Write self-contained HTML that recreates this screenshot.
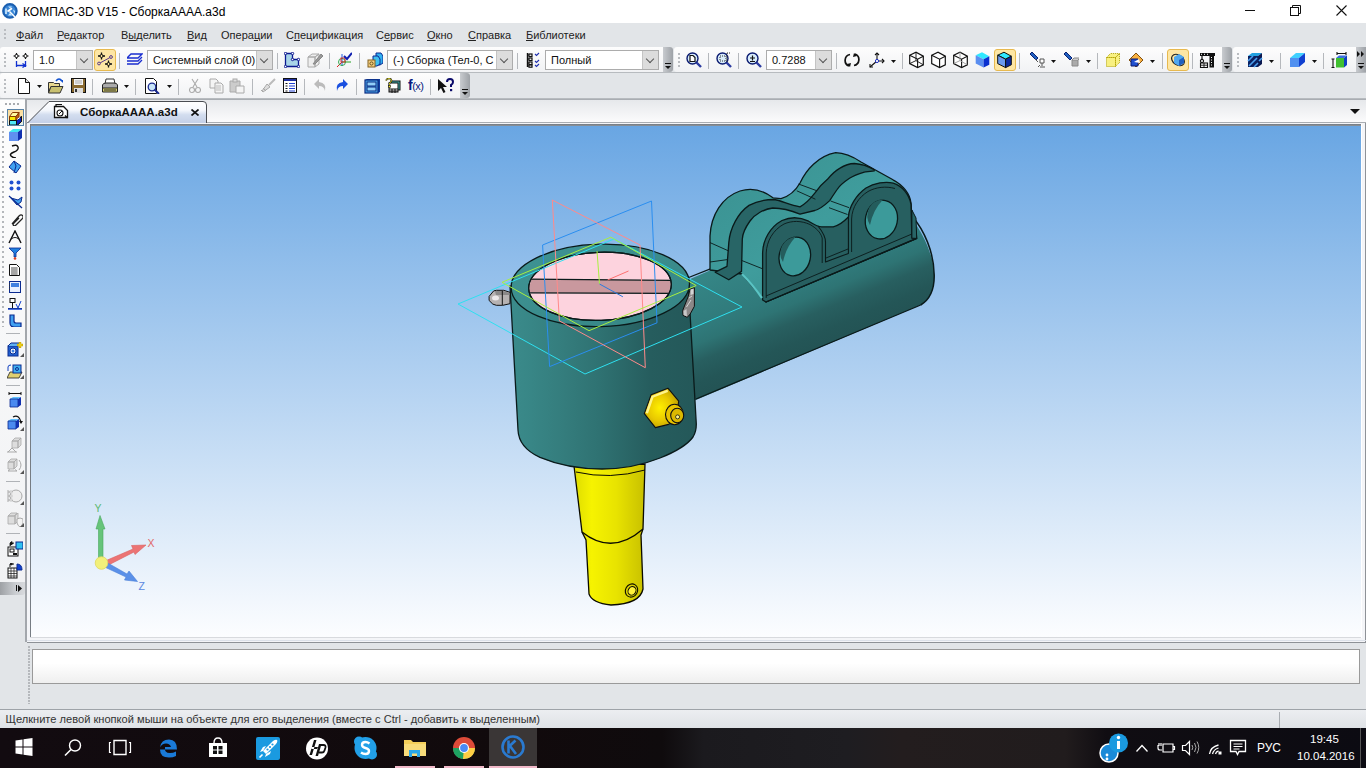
<!DOCTYPE html>
<html><head><meta charset="utf-8">
<style>
*{margin:0;padding:0;box-sizing:border-box}
html,body{width:1366px;height:768px;overflow:hidden;background:#e2e5e8;font-family:"Liberation Sans",sans-serif;position:relative}
.a{position:absolute}
#title{left:0;top:0;width:1366px;height:23px;background:#fff}
#title .t{left:23px;top:5px;font-size:12px;color:#000;white-space:nowrap}
#menu{left:0;top:23px;width:1366px;height:24px;background:#e2e5e8}
#menu span{position:absolute;top:6px;font-size:11px;color:#222;white-space:nowrap}
.tb{background:linear-gradient(#fdfdfd,#f1f2f4);border-radius:3px 3px 3px 3px}
.grip{width:2px;background:repeating-linear-gradient(#b9bcc0 0 2px,transparent 2px 4px)}
.sep{width:1px;height:16px;background:#b5b8bc}
.combo{height:20px;background:#fff;border:1px solid #acacac;font-size:11px;color:#111;padding:3px 0 0 5px;white-space:nowrap;overflow:hidden}
.combo .dd{position:absolute;right:0;top:0;width:16px;height:18px;background:#dcdcdc;border-left:1px solid #c4c4c4}
.combo .dd:after{content:"";position:absolute;left:4px;top:5px;width:5px;height:5px;border-right:1px solid #555;border-bottom:1px solid #555;transform:rotate(45deg)}
.hl{background:#fde6a4;border:1px solid #e7b94f;border-radius:3px}
.endg{background:linear-gradient(90deg,#c8cbcf,#9ea2a7);border-radius:0 3px 3px 0}
#vp{left:31px;top:126px;width:1330px;height:511px;background:linear-gradient(#69a6e3,#fcfdff)}
#status{left:0;top:709px;width:1366px;height:19px;background:linear-gradient(#eceef1,#dfe2e6);border-top:1px solid #9ea3a8}
#status .t{left:5.5px;top:3px;font-size:11.1px;color:#333;white-space:nowrap}
#task{left:0;top:728px;width:1366px;height:40px;background:#110b10}
</style></head><body>
<!-- title bar -->
<div id="title" class="a">
  <svg class="a" style="left:2px;top:3px" width="17" height="17" viewBox="0 0 17 17"><circle cx="7.9" cy="7.9" r="6.8" fill="#3a86d6" stroke="#1b5fb0" stroke-width="2"/><path d="M4 5.5v5.5" stroke="#d8f0ff" stroke-width="1.6"/><path d="M6 3.5h4l-2 1.8z" fill="#c8eaff"/><path d="M5.5 8.5l4.5-3.2" stroke="#fff" stroke-width="1.7"/><path d="M7.5 8.5l5.5 5.5" stroke="#fff" stroke-width="1.5"/><path d="M11 6.5l2 1.5-.5 3z" fill="#c8eaff"/><path d="M6 12.5h4l-2-2.5z" fill="#c8eaff"/></svg>
  <div class="a t">КОМПАС-3D V15 - СборкаАААА.a3d</div>
  <div class="a" style="left:1245px;top:10px;width:10px;height:1px;background:#111"></div>
  <svg class="a" style="left:1290px;top:5px" width="11" height="11" viewBox="0 0 11 11"><rect x="0.5" y="2.5" width="8" height="8" fill="none" stroke="#111"/><path d="M2.5 2.5V0.5h8v8h-2" fill="none" stroke="#111"/></svg>
  <svg class="a" style="left:1336px;top:5px" width="11" height="11" viewBox="0 0 11 11"><path d="M0.5 0.5l10 10M10.5 0.5l-10 10" stroke="#111" stroke-width="1.1"/></svg>
</div>
<!-- menu -->
<div id="menu" class="a">
  <div class="a grip" style="left:4px;top:6px;height:12px"></div>
  <span style="left:16px"><u>Ф</u>айл</span>
  <span style="left:57px"><u>Р</u>едактор</span>
  <span style="left:121px">В<u>ы</u>делить</span>
  <span style="left:187px"><u>В</u>ид</span>
  <span style="left:221px">Опера<u>ц</u>ии</span>
  <span style="left:286px">С<u>п</u>ецификация</span>
  <span style="left:376px">С<u>е</u>рвис</span>
  <span style="left:427px"><u>О</u>кно</span>
  <span style="left:468px"><u>С</u>правка</span>
  <span style="left:526px"><u>Б</u>иблиотеки</span>
</div>
<!-- toolbar lines -->
<div class="a" style="left:0;top:72px;width:1366px;height:1px;background:#b7bbbf"></div>
<div class="a" style="left:0;top:98px;width:1366px;height:1px;background:#b7bbbf"></div>
<!-- row1 panels -->
<div class="a tb" style="left:0;top:47px;width:673px;height:25px"></div>
<div class="a tb" style="left:674px;top:47px;width:557px;height:25px"></div>
<div class="a tb" style="left:1233px;top:47px;width:133px;height:25px"></div>
<!-- row2 panel -->
<div class="a tb" style="left:0;top:73px;width:470px;height:25px"></div>
<div class="a grip" style="left:4px;top:53px;height:14px"></div>
<svg class="a" style="left:13px;top:52px" width="16" height="16" viewBox="0 0 16 16"><g stroke="#111" stroke-width="1.2" fill="none"><path d="M3.5 1v6M0.5 4h6M12.5 1v6M9.5 4h6"/></g><circle cx="3.5" cy="4" r="1.6" fill="#fff" stroke="#111"/><circle cx="12.5" cy="4" r="1.6" fill="#fff" stroke="#111"/><g stroke="#1030d0" stroke-width="1.3" fill="none"><path d="M3.5 9v6M12.5 9v6M3.5 13.5h9"/><path d="M9.5 11.5l3 2-3 2"/></g></svg>
<div class="a combo" style="left:33px;top:50px;width:60px">1.0<div class="dd"></div></div>
<div class="a hl" style="left:94px;top:49px;width:22px;height:22px"></div>
<svg class="a" style="left:97px;top:52px" width="16" height="16" viewBox="0 0 16 16"><g stroke="#111" stroke-width="1.3"><path d="M4.5 0.5v7M1 4h7M11.5 8.5v7M8 12h7"/></g><circle cx="4.5" cy="4" r="1.5" fill="#fde49b" stroke="#111"/><circle cx="11.5" cy="12" r="1.5" fill="#fde49b" stroke="#111"/><path d="M2 11.5L14 5" stroke="#5a3c8c" stroke-width="1"/><circle cx="2" cy="11.5" r="1.4" fill="#fde49b" stroke="#5a3c8c"/><circle cx="14" cy="5" r="1.4" fill="#fde49b" stroke="#5a3c8c"/></svg>
<div class="a sep" style="left:119px;top:53px"></div>
<svg class="a" style="left:127px;top:52px" width="16" height="16" viewBox="0 0 16 16"><g fill="none" stroke="#1a2ed0" stroke-width="1.3"><path d="M4 2h11l-4 4H0z"/><path d="M0 9h11l4-4M0 12h11l4-4"/></g></svg>
<div class="a combo" style="left:147px;top:50px;width:126px">Системный слой (0)<div class="dd"></div></div>
<div class="a sep" style="left:277px;top:53px"></div>
<svg class="a" style="left:284px;top:52px" width="16" height="16" viewBox="0 0 16 16"><path d="M1.5 1.5h7v6h6v7h-13z" fill="#a8d4e8" stroke="#0a1890" stroke-width="1.3"/><g fill="#fff" stroke="#0a1890" stroke-width="1"><circle cx="1.5" cy="1.5" r="1.2"/><circle cx="8.5" cy="1.5" r="1.2"/><circle cx="8.5" cy="7.5" r="1.2"/><circle cx="14.5" cy="7.5" r="1.2"/><circle cx="14.5" cy="14.5" r="1.2"/><circle cx="1.5" cy="14.5" r="1.2"/></g></svg>
<svg class="a" style="left:307px;top:52px" width="16" height="16" viewBox="0 0 16 16"><g fill="#eee" stroke="#aaa" stroke-width="1"><path d="M1 5l4-3h7l-4 3zM1 5h7v10H1zM8 5l4-3v10l-4 3z"/></g><path d="M6 12l8-10 2 2-8 8z" fill="#999" stroke="#888"/></svg>
<div class="a sep" style="left:329px;top:53px"></div>
<svg class="a" style="left:336px;top:52px" width="16" height="16" viewBox="0 0 16 16"><path d="M1 15l5-5" stroke="#e02020"/><path d="M6 2v12" stroke="#2060e0"/><path d="M6 10h9" stroke="#20a020"/><circle cx="6" cy="10" r="3.5" fill="none" stroke="#20a040" stroke-width="0.9"/><rect x="5" y="6" width="4" height="4" fill="none" stroke="#e02020" stroke-width="0.9"/><path d="M8 4l3 3 5-6" fill="none" stroke="#1020b0" stroke-width="2"/></svg>
<div class="a sep" style="left:359px;top:53px"></div>
<svg class="a" style="left:367px;top:52px" width="16" height="16" viewBox="0 0 16 16"><path d="M9 1h5l2 3v7l-3 2H9z" fill="#30b0f0" stroke="#0a2890"/><path d="M6 4h5l2 3v5l-3 2H6z" fill="#40c0f0" stroke="#0a2890"/><rect x="1" y="8" width="7" height="7" fill="#f8d080" stroke="#806020"/><circle cx="4.5" cy="11.5" r="1.6" fill="none" stroke="#605020"/></svg>
<div class="a combo" style="left:387px;top:50px;width:126px">(-) Сборка (Тел-0, С<div class="dd"></div></div>
<div class="a sep" style="left:517px;top:53px"></div>
<svg class="a" style="left:526px;top:52px" width="16" height="16" viewBox="0 0 16 16"><path d="M1.5 1v14" stroke="#111" stroke-width="1.4"/><g fill="#fff" stroke="#111" stroke-width="1.2"><rect x="3" y="2" width="3" height="2.5"/><rect x="3" y="6" width="3" height="2.5"/><rect x="3" y="10" width="3" height="2.5"/><rect x="3" y="13" width="3" height="2.2"/></g><path d="M1.5 3h1.5M1.5 7h1.5M1.5 11h1.5M1.5 14h1.5" stroke="#111"/><g fill="none" stroke="#2030b0" stroke-width="1.1"><path d="M9 2l1.5 1.5L13 1M9 9l1.5 1.5L13 8M9 13l1.5 1.5L13 12"/></g></svg>
<div class="a combo" style="left:545px;top:50px;width:114px">Полный<div class="dd"></div></div>
<div class="a endg" style="left:663px;top:47px;width:10px;height:25px"><div class="a" style="left:2px;top:16px;width:6px;height:1px;background:#111"></div><svg class="a" style="left:2px;top:19px" width="7" height="4" viewBox="0 0 7 4"><path d="M0 0h6l-3 3z" fill="#111"/></svg></div>
<div class="a grip" style="left:678px;top:53px;height:14px"></div>
<svg class="a" style="left:686px;top:52px" width="16" height="16" viewBox="0 0 16 16"><circle cx="6.5" cy="6.5" r="5.5" fill="#d8ecfa" stroke="#0a1a70" stroke-width="1.4"/><path d="M4 3.5h3l2 2v4H4z" fill="#fff" stroke="#111" stroke-width="1.2"/><path d="M10.5 10.5l4.5 4.5" stroke="#2a3aa0" stroke-width="2.4"/></svg>
<div class="a sep" style="left:708px;top:53px"></div>
<svg class="a" style="left:716px;top:52px" width="16" height="16" viewBox="0 0 16 16"><circle cx="6.5" cy="6.5" r="5.5" fill="#d8ecfa" stroke="#0a1a70" stroke-width="1.4"/><rect x="4" y="4" width="6" height="5" fill="none" stroke="#333" stroke-dasharray="1 1"/><path d="M11 1v9M11 1h4" stroke="#333" stroke-dasharray="1 1"/><path d="M10.5 10.5l4.5 4.5" stroke="#2a3aa0" stroke-width="2.4"/></svg>
<div class="a sep" style="left:738px;top:53px"></div>
<svg class="a" style="left:746px;top:52px" width="16" height="16" viewBox="0 0 16 16"><circle cx="6.5" cy="6.5" r="5.5" fill="#d8ecfa" stroke="#0a1a70" stroke-width="1.4"/><path d="M6.5 3.5v5M4 6h5M4 9.5h5" stroke="#111" stroke-width="1.2"/><path d="M10.5 10.5l4.5 4.5" stroke="#2a3aa0" stroke-width="2.4"/></svg>
<div class="a combo" style="left:766px;top:50px;width:66px">0.7288<div class="dd"></div></div>
<div class="a sep" style="left:836px;top:53px"></div>
<svg class="a" style="left:844px;top:52px" width="16" height="16" viewBox="0 0 16 16"><g fill="none" stroke="#111" stroke-width="1.7"><path d="M6 2.5A6 6 0 0 0 5 14"/><path d="M10 13.5A6 6 0 0 0 11 2"/></g><path d="M3 12l3 3 1-4z" fill="#111"/><path d="M13 4l-3-3-1 4z" fill="#111"/></svg>
<svg class="a" style="left:869px;top:52px" width="16" height="16" viewBox="0 0 16 16"><g stroke="#111" stroke-width="1.1" fill="none"><path d="M8 9V1M8 9h7M8 9L1 15"/><path d="M6 3l2-2 2 2M13 7l2 2-2 2M1 12v3h3"/></g><circle cx="8" cy="9" r="1.6" fill="#fff" stroke="#2030c0"/></svg>
<svg class="a" style="left:891px;top:60px" width="6" height="4" viewBox="0 0 6 4"><path d="M0 0h5l-2.5 3z" fill="#111"/></svg>
<div class="a sep" style="left:902px;top:53px"></div>
<svg class="a" style="left:909px;top:51px" width="16" height="18" viewBox="0 0 16 18"><path d="M0.7 4.2L7 1.2L14.3 5.2V13.8L8.6 16.6L0.7 12.6Z" fill="#fff" stroke="#111" stroke-width="1.2"/><path d="M0.7 4.2L8.6 8.2L14.3 5.2M8.6 8.2V16.6" fill="none" stroke="#111" stroke-width="1.1"/><path d="M7 1.2V9.6L0.7 12.6M7 9.6L14.3 13.8" fill="none" stroke="#111" stroke-width="0.9"/></svg>
<svg class="a" style="left:931px;top:51px" width="16" height="18" viewBox="0 0 16 18"><path d="M0.7 4.2L7 1.2L14.3 5.2V13.8L8.6 16.6L0.7 12.6Z" fill="#fff" stroke="#111" stroke-width="1.2"/><path d="M0.7 4.2L8.6 8.2L14.3 5.2M8.6 8.2V16.6" fill="none" stroke="#111" stroke-width="1.1"/></svg>
<svg class="a" style="left:953px;top:51px" width="16" height="18" viewBox="0 0 16 18"><path d="M0.7 4.2L7 1.2L14.3 5.2V13.8L8.6 16.6L0.7 12.6Z" fill="#fff" stroke="#111" stroke-width="1.2"/><path d="M0.7 4.2L8.6 8.2L14.3 5.2M8.6 8.2V16.6" fill="none" stroke="#111" stroke-width="1.1"/><path d="M7 1.2V9.6L0.7 12.6M7 9.6L14.3 13.8" fill="none" stroke="#999" stroke-width="0.9"/></svg>
<svg class="a" style="left:975px;top:51px" width="16" height="18" viewBox="0 0 16 18"><path d="M0.7 4.2L7 1.2L14.3 5.2L8.6 8.2Z" fill="#30e8ff"/><path d="M0.7 4.2L8.6 8.2V16.6L0.7 12.6Z" fill="#5a8ef0"/><path d="M14.3 5.2L8.6 8.2V16.6L14.3 13.8Z" fill="#0a30d0"/></svg>
<div class="a hl" style="left:994px;top:49px;width:22px;height:22px"></div>
<svg class="a" style="left:997px;top:51px" width="16" height="18" viewBox="0 0 16 18"><path d="M0.7 4.2L7 1.2L14.3 5.2L8.6 8.2Z" fill="#30e8ff" stroke="#111"/><path d="M0.7 4.2L8.6 8.2V16.6L0.7 12.6Z" fill="#6a9af0" stroke="#111"/><path d="M14.3 5.2L8.6 8.2V16.6L14.3 13.8Z" fill="#0a2aa0" stroke="#111"/></svg>
<div class="a sep" style="left:1019px;top:53px"></div>
<svg class="a" style="left:1029px;top:52px" width="16" height="16" viewBox="0 0 16 16"><path d="M1 2l2-2 6 6-2 2z" fill="#2060c0" stroke="#0a2070"/><path d="M6 7l3 3" stroke="#555"/><path d="M11 7h4v4h-4zM13 11v3M11 15h5M9 15l2-2" fill="#fff" stroke="#555"/></svg>
<svg class="a" style="left:1051px;top:60px" width="6" height="4" viewBox="0 0 6 4"><path d="M0 0h5l-2.5 3z" fill="#111"/></svg>
<svg class="a" style="left:1063px;top:52px" width="16" height="16" viewBox="0 0 16 16"><path d="M1 2l2-2 6 6-2 2z" fill="#2060c0" stroke="#0a2070"/><path d="M9 8h6v6H9z" fill="#aaa" stroke="#888"/><path d="M9 8l2-2h6l-2 2" fill="#ccc" stroke="#888"/></svg>
<svg class="a" style="left:1086px;top:60px" width="6" height="4" viewBox="0 0 6 4"><path d="M0 0h5l-2.5 3z" fill="#111"/></svg>
<div class="a sep" style="left:1097px;top:53px"></div>
<svg class="a" style="left:1105px;top:52px" width="16" height="16" viewBox="0 0 16 16"><path d="M1.5 5.5l4-4h9l-4 4zM1.5 5.5h9v9h-9zM10.5 5.5l4-4v9l-4 4z" fill="#f8f080" stroke="#b0a000" stroke-dasharray="1 1"/></svg>
<svg class="a" style="left:1128px;top:52px" width="16" height="16" viewBox="0 0 16 16"><path d="M8 1l7 7-7 7-7-7z" fill="#f8b040" stroke="#805010"/><path d="M3 7h7v7H3z" fill="#2050d0" stroke="#0a1a70"/><path d="M6 10l5-3 1 4z" fill="#fff"/></svg>
<svg class="a" style="left:1150px;top:60px" width="6" height="4" viewBox="0 0 6 4"><path d="M0 0h5l-2.5 3z" fill="#111"/></svg>
<div class="a sep" style="left:1162px;top:53px"></div>
<div class="a hl" style="left:1167px;top:49px;width:22px;height:22px"></div>
<svg class="a" style="left:1170px;top:52px" width="16" height="16" viewBox="0 0 16 16"><ellipse cx="8" cy="8" rx="7" ry="5" transform="rotate(35 8 8)" fill="none" stroke="#222" stroke-width="1.2"/><path d="M4 5l5-3 5 3v6l-5 3-5-3z" fill="#50a8f0"/><path d="M9 8l5-3v6l-5 3z" fill="#2060c0"/></svg>
<div class="a sep" style="left:1192px;top:53px"></div>
<svg class="a" style="left:1199px;top:52px" width="16" height="16" viewBox="0 0 16 16"><rect x="1" y="1" width="15" height="3" fill="#111"/><rect x="10.5" y="4" width="4.5" height="11.5" fill="#111"/><g fill="#fff"><rect x="12" y="5" width="1" height="1"/><rect x="12" y="7.5" width="1" height="1"/><rect x="12" y="10" width="1" height="1"/><rect x="12" y="12.5" width="1" height="1"/><rect x="2" y="1.8" width="1" height="1"/><rect x="5" y="1.8" width="1" height="1"/><rect x="8" y="1.8" width="1" height="1"/></g><path d="M3 4v3.5" stroke="#111" stroke-width="1.2"/><circle cx="3" cy="9" r="1.6" fill="none" stroke="#111" stroke-width="1.1"/><rect x="1.5" y="11" width="7" height="4.5" fill="#fff" stroke="#111" stroke-width="1.1"/><path d="M5 11v4.5M1.5 13.2h7" stroke="#111" stroke-width="0.9"/></svg>
<div class="a endg" style="left:1222px;top:47px;width:10px;height:25px"><div class="a" style="left:2px;top:16px;width:6px;height:1px;background:#111"></div><svg class="a" style="left:2px;top:19px" width="7" height="4" viewBox="0 0 7 4"><path d="M0 0h6l-3 3z" fill="#111"/></svg></div>
<div class="a grip" style="left:1237px;top:53px;height:14px"></div>
<svg class="a" style="left:1247px;top:52px" width="16" height="16" viewBox="0 0 16 16"><path d="M1 4l4-3h10l-4 3z" fill="#20a0e0"/><path d="M1 4h10v11H1z" fill="#0a2060"/><path d="M11 4l4-3v11l-4 3z" fill="#0a1850"/><g stroke="#4aa0f0" stroke-width="1.6"><path d="M1 9l5-5M2 14l8-8M7 15l4-4M12 9l3-3"/></g></svg>
<svg class="a" style="left:1269px;top:60px" width="6" height="4" viewBox="0 0 6 4"><path d="M0 0h5l-2.5 3z" fill="#111"/></svg>
<div class="a sep" style="left:1280px;top:53px"></div>
<svg class="a" style="left:1289px;top:52px" width="16" height="16" viewBox="0 0 16 16"><path d="M1 6l6-5h9l-6 5z" fill="#40d0ff"/><path d="M1 6h9v9H1z" fill="#5090f0"/><path d="M10 6l6-5v9l-6 5z" fill="#1040d0"/></svg>
<svg class="a" style="left:1312px;top:60px" width="6" height="4" viewBox="0 0 6 4"><path d="M0 0h5l-2.5 3z" fill="#111"/></svg>
<div class="a sep" style="left:1323px;top:53px"></div>
<svg class="a" style="left:1331px;top:52px" width="16" height="16" viewBox="0 0 16 16"><path d="M6 1.5h9M6 0v3M15 0v3" stroke="#111" stroke-width="1.1"/><path d="M2 7v9M0.5 7h3M0.5 15.5h3" stroke="#111" stroke-width="1.1"/><path d="M5 6l3-2.5h8l-3 2.5z" fill="#3a70e0"/><rect x="5" y="6" width="8" height="9.5" fill="#40c030"/><path d="M13 6l3-2.5v9.5l-3 2.5z" fill="#1040c0"/></svg>
<div class="a endg" style="left:1356px;top:47px;width:10px;height:25px;border-radius:0"><svg class="a" style="left:1px;top:4px" width="8" height="6" viewBox="0 0 8 6"><path d="M0 0l3 3-3 3zM4 0l3 3-3 3z" fill="#111"/></svg><div class="a" style="left:2px;top:16px;width:6px;height:1px;background:#111"></div><svg class="a" style="left:2px;top:19px" width="7" height="4" viewBox="0 0 7 4"><path d="M0 0h6l-3 3z" fill="#111"/></svg></div>
<div class="a grip" style="left:4px;top:79px;height:14px"></div>
<svg class="a" style="left:17px;top:78px" width="14" height="16" viewBox="0 0 14 16"><path d="M1.5 0.5h7l4 4v11h-11z" fill="#fff" stroke="#111"/><path d="M8.5 0.5v4h4" fill="#ddd" stroke="#111"/></svg>
<svg class="a" style="left:37px;top:85px" width="6" height="4" viewBox="0 0 6 4"><path d="M0 0h5l-2.5 3z" fill="#111"/></svg>
<svg class="a" style="left:48px;top:78px" width="16" height="16" viewBox="0 0 16 16"><path d="M0.5 4.5h5l1 1h5v3H3l-2.5 6z" fill="#e8d890" stroke="#333"/><path d="M3 8.5h12l-3 6.5H0.5z" fill="#c8c070" stroke="#333"/><path d="M8 3Q11 -1 14 3" fill="none" stroke="#1050d0" stroke-width="1.6"/><path d="M12 2h3v3z" fill="#1050d0"/></svg>
<svg class="a" style="left:71px;top:78px" width="15" height="16" viewBox="0 0 15 16"><rect x="0.5" y="0.5" width="14" height="14" fill="#8a6a30" stroke="#111"/><rect x="3" y="1" width="9" height="6" fill="#f4f4f4"/><path d="M4 3h7M4 5h7" stroke="#aaa"/><rect x="3" y="10" width="9" height="5" fill="#ddd"/><rect x="4" y="11" width="2" height="3" fill="#333"/></svg>
<div class="a sep" style="left:92px;top:79px"></div>
<svg class="a" style="left:102px;top:78px" width="16" height="16" viewBox="0 0 16 16"><path d="M4 1h8l1 5H3z" fill="#fff" stroke="#333"/><path d="M0.5 7Q1 5 4 5h8q3 0 3.5 2v5h-15z" fill="#aaa" stroke="#222"/><path d="M0.5 10h15v4h-15z" fill="#d8d070" stroke="#222"/><path d="M2 12h12" stroke="#222"/></svg>
<svg class="a" style="left:124px;top:85px" width="6" height="4" viewBox="0 0 6 4"><path d="M0 0h5l-2.5 3z" fill="#111"/></svg>
<div class="a sep" style="left:135px;top:79px"></div>
<svg class="a" style="left:145px;top:78px" width="16" height="16" viewBox="0 0 16 16"><path d="M0.5 0.5h8l3 3v12h-11z" fill="#fff" stroke="#111"/><circle cx="7" cy="9" r="3.8" fill="#c8e4f8" stroke="#1a2a90" stroke-width="1.3"/><path d="M9.5 11.5l4.5 4.5" stroke="#1a2a90" stroke-width="2"/></svg>
<svg class="a" style="left:167px;top:85px" width="6" height="4" viewBox="0 0 6 4"><path d="M0 0h5l-2.5 3z" fill="#111"/></svg>
<div class="a sep" style="left:178px;top:79px"></div>
<svg class="a" style="left:189px;top:78px" width="12" height="16" viewBox="0 0 12 16"><g fill="none" stroke="#aaa" stroke-width="1.1"><path d="M3 1l5 8M9 1L4 9"/><circle cx="3" cy="12" r="2.5"/><circle cx="9" cy="12" r="2.5"/></g></svg>
<svg class="a" style="left:209px;top:78px" width="16" height="16" viewBox="0 0 16 16"><path d="M1 1h6l2 2v7H1z" fill="#f4f4f4" stroke="#aaa"/><path d="M6 5h6l2 2v8H6z" fill="#f4f4f4" stroke="#aaa"/><path d="M7 8h5M7 10h5M7 12h5" stroke="#bbb"/></svg>
<svg class="a" style="left:229px;top:78px" width="16" height="16" viewBox="0 0 16 16"><path d="M1 3h10v11H1z" fill="#ccc" stroke="#aaa"/><rect x="4" y="1" width="4" height="3" fill="#ddd" stroke="#aaa"/><path d="M7 8h8v7H7z" fill="#f4f4f4" stroke="#aaa"/></svg>
<div class="a sep" style="left:252px;top:79px"></div>
<svg class="a" style="left:260px;top:78px" width="16" height="16" viewBox="0 0 16 16"><path d="M9 7l6-6" stroke="#bbb" stroke-width="2"/><path d="M2 13l5-7 3 3-7 5z" fill="#ddd" stroke="#aaa"/><path d="M3 10l3 3M1 12l2 2" stroke="#aaa"/></svg>
<svg class="a" style="left:283px;top:78px" width="14" height="16" viewBox="0 0 14 16"><rect x="0.5" y="0.5" width="13" height="14" fill="#fff" stroke="#111"/><rect x="1" y="1" width="12" height="2" fill="#2030a0"/><g stroke="#111"><path d="M2.5 5.5h2M2.5 8h2M2.5 10.5h2M2.5 13h2"/></g><g stroke="#2040d0"><path d="M6 5.5h6M6 8h6M6 10.5h6M6 13h6"/></g></svg>
<div class="a sep" style="left:304px;top:79px"></div>
<svg class="a" style="left:314px;top:78px" width="14" height="16" viewBox="0 0 14 16"><path d="M5 1L0 6l5 5V8q5 0 6 5 2-8-6-9z" fill="#bbb"/></svg>
<svg class="a" style="left:334px;top:78px" width="14" height="16" viewBox="0 0 14 16"><path d="M9 1l5 5-5 5V8q-5 0-6 5-2-8 6-9z" fill="#1a50e0"/></svg>
<div class="a sep" style="left:356px;top:79px"></div>
<svg class="a" style="left:364px;top:78px" width="16" height="16" viewBox="0 0 16 16"><path d="M1 2l2-1h13v13l-2 1z" fill="#1040a0"/><rect x="1" y="2" width="13" height="13" fill="#50b0f0" stroke="#0a2a80" stroke-width="1.2"/><rect x="3" y="4" width="9" height="4" fill="#90d0f8" stroke="#0a2a80"/><rect x="3" y="9" width="9" height="4" fill="#90d0f8" stroke="#0a2a80"/></svg>
<svg class="a" style="left:385px;top:78px" width="16" height="16" viewBox="0 0 16 16"><rect x="6" y="3" width="9" height="9" fill="#40b0b0" stroke="#111"/><rect x="4" y="5" width="9" height="9" fill="#fff" stroke="#111"/><path d="M4 11h9M4 13h9M7 11v4M10 11v4" stroke="#111"/><path d="M1 2.5q1-2 3-2t2.5 2q0 1.5-2 2.5v1.5" fill="none" stroke="#111" stroke-width="1.6"/><path d="M1 2.5q1-2 3-2t2.5 2q0 1.5-2 2.5v1.5" fill="none" stroke="#f8f020" stroke-width="0.8"/><rect x="3.5" y="7.5" width="2" height="2" fill="#f0e020" stroke="#111" stroke-width="0.6"/></svg>
<div class="a" style="left:408px;top:77px;font-size:14px;font-weight:bold;color:#0a1a80;white-space:nowrap;letter-spacing:-0.5px">f<span style="font-size:11px;font-weight:normal">(x)</span></div>
<div class="a sep" style="left:430px;top:79px"></div>
<svg class="a" style="left:437px;top:78px" width="17" height="16" viewBox="0 0 17 16"><path d="M1 1v12l3-3 2.5 5 2-1-2.5-5h4z" fill="#111"/><path d="M10 4q0-3 3-3t3 3q0 2-2 3v2" fill="none" stroke="#0a0a6a" stroke-width="2"/><rect x="13" y="11" width="2.2" height="2.2" fill="#0a0a6a"/></svg>
<div class="a endg" style="left:460px;top:73px;width:10px;height:25px"><div class="a" style="left:2px;top:16px;width:6px;height:1px;background:#111"></div><svg class="a" style="left:2px;top:19px" width="7" height="4" viewBox="0 0 7 4"><path d="M0 0h6l-3 3z" fill="#111"/></svg></div>

<!-- tab strip -->
<div class="a" style="left:27px;top:99px;width:1339px;height:24px;background:linear-gradient(#e6e8eb,#fbfbfc);border-top:1px solid #a9adb2;border-bottom:1px solid #a9adb2"></div>
<!-- left toolbar -->
<div class="a" style="left:0;top:99px;width:27px;height:543px;background:#e2e5e8;border-right:2px solid #a3a7ac"></div>
<div class="a tb" style="left:0;top:100px;width:25px;height:482px;border-radius:0"></div>
<div class="a" style="left:5px;top:103px;width:15px;height:2px;background:repeating-linear-gradient(90deg,#a9acb0 0 2px,transparent 2px 4px)"></div>
<div class="a" style="left:2px;top:111px;width:2px;height:216px;background:repeating-linear-gradient(#b4b7bb 0 2px,transparent 2px 5px)"></div>
<div class="a" style="left:7px;top:109px;width:17px;height:17px;border:1px solid #5a84a8;background:linear-gradient(#fcdc98,#fbe8b8 60%,#dff2f4)"></div>
<svg class="a" style="left:8px;top:110px" width="15" height="15" viewBox="0 0 15 15"><path d="M1.5 6.5l3-4h6.5l-3 4z" fill="#fff9a0" stroke="#8a3a00" stroke-width="1"/><path d="M1.5 6.5h6.5v4H1.5z" fill="#f8e800" stroke="#8a3a00" stroke-width="1"/><path d="M8 6.5l3-4v4l-3 4z" fill="#c06010" stroke="#8a3a00" stroke-width="1"/><path d="M1.5 10.5h7l5-4v5l-4 3.5H1.5z" fill="#50e8f8" stroke="#111" stroke-width="1"/><path d="M8.5 10.5l5-4v5l-4 3.5h-1z" fill="#0a20c0" stroke="#111" stroke-width="1"/><path d="M9 9.5l3-2" stroke="#fff" stroke-width="1"/></svg>
<svg class="a" style="left:8px;top:128px" width="15" height="14" viewBox="0 0 15 14"><path d="M1 4l4-3h9l-4 3z" fill="#40e8f0"/><path d="M1 4h9v9H1z" fill="#6090f0"/><path d="M10 4l4-3v9l-4 3z" fill="#1030b0"/></svg>
<svg class="a" style="left:9px;top:144px" width="13" height="14" viewBox="0 0 13 14"><path d="M3 2q5-2 6 1t-4 5-3 4 5 2" fill="none" stroke="#111" stroke-width="1.4"/></svg>
<svg class="a" style="left:8px;top:160px" width="14" height="14" viewBox="0 0 14 14"><path d="M1 7l5-6 7 5-5 7z" fill="#40a0f0" stroke="#0a2a90"/><path d="M6 1l2 5-2 7" fill="none" stroke="#0a2a90"/></svg>
<svg class="a" style="left:9px;top:180px" width="12" height="11" viewBox="0 0 12 11"><g fill="#2050d0"><circle cx="2.5" cy="2.5" r="2"/><circle cx="9.5" cy="2.5" r="2"/><circle cx="2.5" cy="8.5" r="2"/><circle cx="9.5" cy="8.5" r="2"/></g></svg>
<svg class="a" style="left:8px;top:195px" width="15" height="14" viewBox="0 0 15 14"><path d="M3 3l7 2 4-3-1 5-4 3z" fill="#40a0f0" stroke="#0a2a90"/><path d="M1 1l13 12" stroke="#0a2a90" stroke-width="1.3"/></svg>
<svg class="a" style="left:9px;top:213px" width="14" height="13" viewBox="0 0 14 13"><path d="M3 11l7-8q2-2 3.5-.5t-.5 3.5L7 12q-1.5 1.5-2.5.5t.5-2.5l5-5" fill="none" stroke="#222" stroke-width="1.2"/></svg>
<svg class="a" style="left:8px;top:230px" width="14" height="14" viewBox="0 0 14 14"><path d="M1 13L7 1l6 12" fill="none" stroke="#111" stroke-width="1.4"/><path d="M3 9q4-3 8 0" fill="none" stroke="#111" stroke-width="1.2"/></svg>
<svg class="a" style="left:8px;top:247px" width="14" height="13" viewBox="0 0 14 13"><path d="M1 1h12L8 6v4H6V6z" fill="#2080e0" stroke="#0a2a90" stroke-width="0.8"/><circle cx="7" cy="11.5" r="1.3" fill="#e04020"/></svg>
<svg class="a" style="left:9px;top:264px" width="11" height="12" viewBox="0 0 11 12"><path d="M0.5 0.5h7l3 3v8h-10z" fill="#fff" stroke="#111"/><g stroke="#666" stroke-width="0.7"><path d="M2 4h7M2 6h7M2 8h7M2 10h7M3 3v8M5 3v8M7 3v8"/></g></svg>
<svg class="a" style="left:9px;top:281px" width="12" height="12" viewBox="0 0 12 12"><rect x="0.5" y="0.5" width="11" height="11" fill="#e8f0ff" stroke="#0a2a90"/><rect x="2" y="2" width="8" height="4" fill="#4080e0"/><path d="M0.5 2v8" stroke="#333" stroke-dasharray="1 1"/></svg>
<svg class="a" style="left:8px;top:298px" width="14" height="12" viewBox="0 0 14 12"><rect x="2" y="0.5" width="5" height="4" fill="#fff" stroke="#111"/><path d="M4.5 4.5v6M0 10.5h14" stroke="#111"/><path d="M0 11h14" stroke="#1040d0" stroke-width="1.5"/><path d="M8 6l2 4 3-7" fill="none" stroke="#1040d0"/></svg>
<svg class="a" style="left:8px;top:314px" width="14" height="13" viewBox="0 0 14 13"><path d="M2 1h4v6q0 2 2 2h5v4H6q-4 0-4-4z" fill="#40a0f0" stroke="#0a2a90" stroke-width="1.2"/></svg>
<div class="a" style="left:6px;top:333px;width:14px;height:1px;background:#b0b3b7"></div>
<svg class="a" style="left:7px;top:342px" width="16" height="15" viewBox="0 0 16 15"><rect x="1" y="4" width="10" height="10" fill="#2060d0" stroke="#0a2a90"/><path d="M1 4l3-3h9l-2 3" fill="#60b0f0" stroke="#0a2a90"/><circle cx="6" cy="9" r="3" fill="#fff" stroke="#0a2a90"/><circle cx="6" cy="9" r="1.5" fill="#4080e0"/><path d="M13 0v6M10 3h6" stroke="#c0a000" stroke-width="2.4"/><path d="M13 0.5v5M10.5 3h5" stroke="#ffe020" stroke-width="1"/></svg>
<svg class="a" style="left:20px;top:353px" width="4" height="4" viewBox="0 0 4 4"><path d="M4 0v4H0z" fill="#555"/></svg>
<svg class="a" style="left:7px;top:363px" width="16" height="16" viewBox="0 0 16 16"><path d="M0 15l3-6h12l-3 6z" fill="#e0d070" stroke="#222" stroke-width="0.8"/><rect x="6" y="2" width="8" height="8" fill="#40b0f0" stroke="#0a2a90"/><circle cx="10" cy="6" r="1.5" fill="none" stroke="#0a2a90"/><path d="M1 8v-4q0-2 3-2" fill="none" stroke="#1040c0"/></svg>
<svg class="a" style="left:20px;top:375px" width="4" height="4" viewBox="0 0 4 4"><path d="M4 0v4H0z" fill="#555"/></svg>
<div class="a" style="left:6px;top:385px;width:14px;height:1px;background:#b0b3b7"></div>
<svg class="a" style="left:8px;top:392px" width="14" height="16" viewBox="0 0 14 16"><path d="M1 1.5h12M1 0v3M13 0v3" stroke="#111"/><path d="M2 7l3-2h8l-3 2z" fill="#60c0ff"/><path d="M2 7h8v8H2z" fill="#4a8af0" stroke="#0a2a90" stroke-width="0.8"/><path d="M10 7l3-2v8l-3 2z" fill="#1030b0"/></svg>
<svg class="a" style="left:7px;top:414px" width="16" height="16" viewBox="0 0 16 16"><path d="M1 7l3-2h8l-3 2z" fill="#60c0ff"/><path d="M1 7h8v8H1z" fill="#4a8af0" stroke="#0a2a90" stroke-width="0.8"/><path d="M9 7l3-2v8l-3 2z" fill="#1030b0"/><path d="M6 3q6-3 8 5" fill="none" stroke="#111" stroke-width="1.3"/><path d="M12 7l2 3 2-3z" fill="#111"/></svg>
<svg class="a" style="left:20px;top:427px" width="4" height="4" viewBox="0 0 4 4"><path d="M4 0v4H0z" fill="#555"/></svg>
<svg class="a" style="left:7px;top:437px" width="16" height="16" viewBox="0 0 16 16"><path d="M5 4l3-3h6l-3 3zM5 4h6v7H5zM11 4l3-3v7l-3 3z" fill="#ddd" stroke="#aaa" stroke-width="0.8"/><path d="M1 15l4-4 4 4M0 15h10" fill="none" stroke="#aaa"/></svg>
<svg class="a" style="left:7px;top:457px" width="16" height="16" viewBox="0 0 16 16"><path d="M1 5l3-3h6l-3 3zM1 5h6v7H1zM7 5l3-3v7l-3 3z" fill="#ddd" stroke="#aaa" stroke-width="0.8"/><path d="M12 3q4 5 0 10" fill="none" stroke="#aaa"/><path d="M1 14h9M1 14l2-1.5M10 14l-2-1.5" stroke="#aaa"/></svg>
<svg class="a" style="left:20px;top:470px" width="4" height="4" viewBox="0 0 4 4"><path d="M4 0v4H0z" fill="#555"/></svg>
<div class="a" style="left:6px;top:481px;width:14px;height:1px;background:#b0b3b7"></div>
<svg class="a" style="left:7px;top:488px" width="16" height="16" viewBox="0 0 16 16"><circle cx="9" cy="8" r="6" fill="#eee" stroke="#aaa"/><path d="M1 2v12M1 4h4M1 8h4M1 12h4" stroke="#aaa"/><rect x="3" y="3" width="2" height="2" fill="#fff" stroke="#aaa" stroke-width="0.6"/><rect x="3" y="7" width="2" height="2" fill="#fff" stroke="#aaa" stroke-width="0.6"/><rect x="3" y="11" width="2" height="2" fill="#fff" stroke="#aaa" stroke-width="0.6"/></svg>
<svg class="a" style="left:20px;top:501px" width="4" height="4" viewBox="0 0 4 4"><path d="M4 0v4H0z" fill="#555"/></svg>
<svg class="a" style="left:7px;top:511px" width="16" height="16" viewBox="0 0 16 16"><path d="M1 5l3-3h6l-3 3zM1 5h7v8H1zM8 5l3-3v8l-3 3z" fill="#ddd" stroke="#aaa" stroke-width="0.8"/><path d="M10 8l3-1 3 1v4q-1 3-3 4-2-1-3-4z" fill="#f4f4f4" stroke="#aaa"/></svg>
<svg class="a" style="left:20px;top:523px" width="4" height="4" viewBox="0 0 4 4"><path d="M4 0v4H0z" fill="#555"/></svg>
<div class="a" style="left:6px;top:533px;width:14px;height:1px;background:#b0b3b7"></div>
<svg class="a" style="left:7px;top:541px" width="16" height="16" viewBox="0 0 16 16"><rect x="1" y="6" width="10" height="9" fill="#fff" stroke="#111"/><rect x="3" y="8" width="4" height="3" fill="#fff" stroke="#111"/><rect x="6" y="12" width="4" height="2" fill="#111"/><rect x="9" y="1" width="7" height="7" fill="#30c0f0" stroke="#0a2a90"/><path d="M3 5V2h4M3 2l2-1.5v3z" fill="#111" stroke="#111" stroke-width="0.8"/></svg>
<svg class="a" style="left:7px;top:563px" width="16" height="16" viewBox="0 0 16 16"><rect x="1" y="5" width="9" height="10" fill="#fff" stroke="#111"/><g stroke="#111" stroke-width="0.7"><path d="M1 8h9M1 10.5h9M1 13h9M4 5v10M7 5v10"/></g><path d="M10 1q5 0 5 6h-5z" fill="#1040d0" stroke="#0a2a90"/><path d="M3 4V1h4M3 1l2-1v2z" fill="none" stroke="#111"/></svg>
<div class="a" style="left:0;top:582px;width:25px;height:13px;background:linear-gradient(90deg,#9ea1a5,#c9ccd0 60%,#d8dadd);border-radius:0 0 3px 0"><div class="a" style="left:16px;top:3px;width:1px;height:6px;background:#111"></div><svg class="a" style="left:18px;top:3px" width="4" height="7" viewBox="0 0 4 7"><path d="M0 0l4 3.5L0 7z" fill="#111"/></svg></div>
<svg class="a" style="left:0;top:0" width="260" height="130" viewBox="0 0 260 130">
<defs><linearGradient id="gTab" x1="0" y1="0" x2="0" y2="1"><stop offset="0" stop-color="#ffffff"/><stop offset="0.4" stop-color="#f4f7fc"/><stop offset="0.6" stop-color="#d3ddef"/><stop offset="1" stop-color="#c3cfe6"/></linearGradient></defs>
<path d="M27 123.5 L49 101.5 L203 101.5 Q206.5 101.5 206.5 105 L206.5 123.5 Z" fill="url(#gTab)" stroke="#4a4d52" stroke-width="1"/>
<path d="M28 123.5 L206 123.5" stroke="#c3cfe6" stroke-width="1"/>
</svg>
<svg class="a" style="left:53px;top:103px" width="16" height="16" viewBox="0 0 16 16"><path d="M1.5 3.5h9l4 4v7h-13z" fill="#fff" stroke="#111" stroke-width="1.3"/><path d="M3 3.5V1.5h6" fill="none" stroke="#111" stroke-width="1.2"/><circle cx="7" cy="10" r="3" fill="none" stroke="#111" stroke-width="1.1"/><path d="M6 11l3-3" stroke="#111"/><path d="M12 12.5l2.5 2.5" stroke="#111" stroke-width="1.4"/></svg>
<div class="a" style="left:80px;top:105.5px;font-size:11.5px;font-weight:bold;color:#111;white-space:nowrap">СборкаАААА.a3d</div>
<svg class="a" style="left:191px;top:109px" width="8" height="7" viewBox="0 0 8 7"><path d="M0.5 0.5l7 6M7.5 0.5l-7 6" stroke="#111" stroke-width="1.7"/></svg>
<svg class="a" style="left:1350px;top:109px" width="10" height="5" viewBox="0 0 10 5"><path d="M0 0h10L5 5z" fill="#111"/></svg>

<!-- viewport frame -->
<div class="a" style="left:27px;top:123px;width:1339px;height:520px;background:#f4f5f8;border-right:1px solid #8e9297;border-bottom:1px solid #8e9297"></div>
<div class="a" style="left:30px;top:124px;width:1331px;height:2px;background:linear-gradient(#737a82,#8d949b)"></div>
<div class="a" style="left:30px;top:124px;width:1px;height:513px;background:#767c83"></div>
<div class="a" style="left:30px;top:637px;width:1332px;height:1px;background:#d8dade"></div>
<div class="a" style="left:1361px;top:124px;width:1px;height:514px;background:#ffffff"></div>
<div class="a" style="left:27px;top:640px;width:1339px;height:1px;background:#dde2ea"></div>
<div id="vp" class="a"></div>
<svg class="a" style="left:0;top:0" width="1366" height="768" viewBox="0 0 1366 768">
<defs>
<linearGradient id="gArm" gradientUnits="userSpaceOnUse" x1="780" y1="225" x2="830" y2="345"><stop offset="0" stop-color="#378a8a"/><stop offset="0.5" stop-color="#307a7b"/><stop offset="0.6" stop-color="#2e7474"/><stop offset="0.73" stop-color="#285f60"/><stop offset="0.88" stop-color="#245657"/><stop offset="1" stop-color="#235354"/></linearGradient>
<linearGradient id="gHub" x1="0" y1="0" x2="1" y2="0"><stop offset="0" stop-color="#3b8b8b"/><stop offset="0.11" stop-color="#388686"/><stop offset="0.3" stop-color="#347c7c"/><stop offset="0.48" stop-color="#2f7272"/><stop offset="0.75" stop-color="#265d5e"/><stop offset="1" stop-color="#245859"/></linearGradient>
<linearGradient id="gPin" x1="0" y1="0" x2="1" y2="0"><stop offset="0" stop-color="#dedc00"/><stop offset="0.25" stop-color="#f6f300"/><stop offset="0.6" stop-color="#e8e300"/><stop offset="1" stop-color="#c8c000"/></linearGradient>
<linearGradient id="gRing" x1="0" y1="0" x2="1" y2="1"><stop offset="0" stop-color="#3f9494"/><stop offset="1" stop-color="#368585"/></linearGradient>
<radialGradient id="gNip" cx="0.45" cy="0.5" r="0.6"><stop offset="0" stop-color="#fff000"/><stop offset="0.55" stop-color="#e8c800"/><stop offset="1" stop-color="#b89a00"/></radialGradient>
<linearGradient id="gBr" x1="0" y1="0" x2="1" y2="1"><stop offset="0" stop-color="#3a9090"/><stop offset="0.5" stop-color="#3f9c9c"/><stop offset="1" stop-color="#348585"/></linearGradient>
</defs>
<g stroke="#0a1a1a" stroke-width="1.3" stroke-linejoin="round">
<!-- arm -->
<path d="M660 292 L872.5 200.3 L900 207 C912 214 934 248 934.2 275 C934.5 290 929 300 920.7 305 L665 413 Z" fill="url(#gArm)" stroke="none"/>
<path d="M696 399 L920.7 305" fill="none"/>
<path d="M912 216 C924 230 934 252 934.2 275 C934.5 290 929 300 920.7 305" fill="none" stroke-width="1.5"/>
<path d="M688.7 277.5 L711 268.6" fill="none"/>
<!-- bracket back part -->
<path d="M710 270 L710 236 C711 215 722 197 740 191 C752 187 764 191 773 197.8 L781 198.6 C790 196 796 190 800 183 C806 170 818 156 835.7 152.7 C846 153 855 158 861 162 L893 179.8 C903 185 910 194 911 203 L912 218 L916 231 L916.7 238.4 L766 302 L742 274 Z" fill="url(#gBr)"/>
<!-- dark S band -->
<path d="M715.2 272.2 L727 266.3 L728.8 242.6 C730 228 738 213 749 205.4 C757 201 766 199.5 774.5 199.5 C782 201 790 205 800 206.8 C806 204 811 198 814.8 193.2 C819 187 823 183 827.2 179.6 C831 175 835 171 839.6 168.4 C845 165 850 163.5 854.4 163.5 C862 164 868 166 874.2 169.7 L874.2 170.9 C870 171.5 867 171.8 864.3 172.1 C858 174 853 176 849.5 178.3 C844 182 840 185 837.1 189.5 C834 194 832 197 829.7 200.6 C825 205 820 209 814.8 210.5 L800 214.2 C790 210 782 208 772.8 208 C764 209 755 214 750 221 C745 228 742.5 234 742.3 239.2 L741.5 271.4 L728.8 279.8 Z" fill="#286566"/>
<!-- front plate -->
<path d="M762.6 300 L762.6 252.8 C763 240 770 227 782 220.5 C790 217 800 217 808.6 221.2 C814 224.5 818 226.8 821.6 226.8 L833.3 226.8 C839 225.5 844 221.5 848.4 217 C849 207 856 195 866 188 C874 183 886 181 893.2 183.2 C902 186 909 194 911 204.3 L911.9 238.2 L916.7 238.4 L766 302 Z" fill="#275f60"/>
<path d="M818 226 C822 231 825.5 236 825.5 242 L825.5 262 L848.4 253.4 L848.4 217" fill="none" stroke-width="1.1"/>
<path d="M826 258 L848 249" fill="none" stroke-width="0.9"/>
<path d="M766.2 298 L766.2 253 C766.7 241 773 230 784 224 C792 220.5 801 220.5 810 224.5 C816 228 820.5 232 822.2 238 L822.2 263" fill="none" stroke-width="0.9"/>
<path d="M851.6 252 L851.6 219 C852 207 859 197 868 191.5 C876 187 886 186 895 188.5" fill="none" stroke-width="0.9"/>
<path d="M911.9 210 L916 218 L916.7 238.4 L911.9 238.2 Z" fill="#286566" stroke-width="1"/>
<path d="M766 302 L916.7 238.4" fill="none"/>
<path d="M766 296 L911.9 234" fill="none" stroke-width="0.9"/>
<!-- band lines -->
<path d="M798.5 184 L817 190.8 M796.8 190.8 L815.4 199.2 M830.6 201 L849.2 207.7 M829 207.7 L847.5 214.5" fill="none" stroke-width="0.9"/>
<path d="M710 242.6 L728.8 251 M710 262 L728 259.5 M741.5 260.4 L762.6 268.8" fill="none" stroke-width="0.9"/>
<!-- fillet highlight -->
<path d="M742 274 Q752 284 762 298" fill="none" stroke="#5ac4c4" stroke-width="2.2"/>
<!-- holes -->
<ellipse cx="794.8" cy="256.5" rx="15.6" ry="19.6" transform="rotate(12 794.8 256.5)" fill="#3c9a9a"/>
<path d="M782 246 Q786 238 796 236.5 Q786 247 783 262 Q778 255 782 246Z" fill="#245c5c" stroke="none"/>
<ellipse cx="881.4" cy="219.6" rx="16" ry="19.5" transform="rotate(12 881.4 219.6)" fill="#3c9a9a"/>
<path d="M869 208 Q873 200 883 199.5 Q873 210 870 225 Q865 217 869 208Z" fill="#245c5c" stroke="none"/>
</g>
<!-- pin -->
<g stroke="#0a0a00" stroke-width="1.3">
<path d="M574 466 L645 464 L643 529 L641 535 L643 589 Q640 604 611 605 Q592 603 589 594 L586 540 L582 532 Z" fill="url(#gPin)"/>
<path d="M582 532 Q612 556 643 529" fill="none"/>
<path d="M576 472 Q610 480 645 470" fill="none" stroke-width="1"/>
<ellipse cx="631.5" cy="590.5" rx="6" ry="6.8" transform="rotate(30 631.5 590.5)" fill="#d8d000" stroke-width="1.1"/><ellipse cx="632" cy="590.8" rx="3.8" ry="4.4" transform="rotate(30 632 590.8)" fill="#fff23a" stroke-width="1"/>
</g>
<!-- hub body -->
<path d="M510 286 L518 430 C518.5 442 526 451 540 457.4 C558 465 580 469 602 469 C625 469 645 464 660 458 C675 452 688 444 693 437 C695.5 433 696.3 429 696.3 424 L688 277 Z" fill="url(#gHub)" stroke="#0a1a1a" stroke-width="1.3"/>
<!-- top ring -->
<ellipse cx="600.3" cy="285.4" rx="89.2" ry="41.2" transform="rotate(-1.5 600.3 285.4)" fill="url(#gRing)" stroke="#0a1a1a" stroke-width="1.3"/>
<ellipse cx="600" cy="286.3" rx="71.3" ry="34" transform="rotate(-2 600 286.3)" fill="#fdd3de" stroke="#0a1a1a" stroke-width="1.3"/>
<clipPath id="cpDisc"><ellipse cx="600" cy="286.3" rx="70.6" ry="33.3" transform="rotate(-2 600 286.3)"/></clipPath>
<g clip-path="url(#cpDisc)"><path d="M520 279 L680 280.5 L680 293.5 L520 292.8 Z" fill="#c9989e" stroke="#0a1a1a" stroke-width="1.3"/></g>
<ellipse cx="600" cy="286.3" rx="71.3" ry="34" transform="rotate(-2 600 286.3)" fill="none" stroke="#0a1a1a" stroke-width="1.3"/>
<!-- nipple -->
<g stroke="#111" stroke-width="1.1" stroke-linejoin="round">
<path d="M644.3 413.6 L651.1 394.7 L667.9 388.2 L678.7 401.1 L676 420 L668.6 424.4 L655.4 427.6 Z" fill="url(#gNip)"/>
<path d="M645.5 413 L651.5 396 L667.5 389.5 L668 392 L653.5 397.5 L648 413.5 Z" fill="#fff48a" stroke="none"/>
<ellipse cx="674.5" cy="414.5" rx="9" ry="10.2" fill="#e8c400"/>
<ellipse cx="677.2" cy="415.5" rx="6.5" ry="7.3" fill="#dcb800"/>
<circle cx="677.6" cy="416.9" r="2" fill="#fff690" stroke-width="0.8"/>
</g>
<!-- knob -->
<g stroke="#111" stroke-width="1">
<path d="M489.1 296.4 L493.7 290.9 L496.4 290.3 L503.7 290.3 L510 292.3 L510 303.7 L502.8 305.3 L496.4 305.3 L492.8 304.1 L489.1 300.5 Z" fill="#b6b2b2"/>
<path d="M495 291 L503 291 L509.5 293 L509.5 295 L496 295 Z" fill="#8a8888" stroke="none"/>
<path d="M502.3 291 V305" fill="none"/>
<ellipse cx="495.5" cy="298" rx="3.5" ry="2.5" fill="#ece8ea" stroke="none"/>
<path d="M690.2 288.7 L694.4 287.7 L694.4 306.3 L690.2 314 L687.3 317.3 L683 315.4 L682.7 310.5 L688.2 296.5 Z" fill="#8c8888"/>
<path d="M690.7 289.5 L693.5 288.8 L693.5 294 L690.5 295 Z" fill="#d4d4d4" stroke="none"/>
<path d="M683.5 311 L686.5 309 L687 316.5 L683.6 315 Z" fill="#c8c8c8" stroke="none"/>
<path d="M689 298 L692 296 M686.5 307 L691 300" fill="none" stroke="#dcdcdc" stroke-width="0.9"/>
</g>
<!-- planes -->
<g fill="none" stroke-width="1">
<path d="M458 304 L614 239 L742 307 L585 374 Z" stroke="#2ee0f0"/>
<path d="M542.6 245 L651.5 201 L657 322.8 L549.6 366.6 Z" stroke="#2a8ef0"/>
<path d="M552.3 200 L640 245 L645.3 367.7 L559.4 320.9 Z" stroke="#ff8a8a"/>
<path d="M502 282.3 L610.8 237.2 L696.2 285.6 L589 330.7 Z" stroke="#a8f040"/>
<path d="M597 251 L599.5 284" stroke="#a8f040"/>
<path d="M607.6 280 L628.5 271" stroke="#ff7070"/>
<path d="M599.5 284 L622.9 296.8" stroke="#2a7ae0"/>
</g>
<!-- axes -->
<g>
<path d="M100 515.5 L96 529 L98.5 529 L98.5 558 L103 558 L103 529 L105 529 Z" fill="#66c47a" stroke="#4aa860" stroke-width="0.6"/>
<text x="94.5" y="512" font-size="10.5" fill="#5cb870" font-family="Liberation Sans">Y</text>
<path d="M105 561 L133 549 L131.5 545.5 L146 545 L135 554.5 L134 552 L106.5 566 Z" fill="#ec7474" stroke="#d86060" stroke-width="0.6"/>
<text x="147.5" y="546.5" font-size="10.5" fill="#e06868" font-family="Liberation Sans">X</text>
<path d="M106 562 L127 574 L129 571 L137.5 581.5 L124.5 580 L126 577 L103.5 566.5 Z" fill="#5a90e8" stroke="#4a80d8" stroke-width="0.6"/>
<text x="138.5" y="589.5" font-size="10.5" fill="#5a88e0" font-family="Liberation Sans">Z</text>
<circle cx="101.5" cy="563" r="6.3" fill="#f2f07a" stroke="#e0d860" stroke-width="0.8"/>
</g>
</svg>

<!-- lower panel -->
<div class="a" style="left:28px;top:646px;width:2px;height:58px;background:repeating-linear-gradient(#b5b8bc 0 2px,transparent 2px 3px)"></div>
<div class="a" style="left:32px;top:649px;width:1328px;height:35px;background:linear-gradient(#fff 40%,#efefef);border:1px solid #9a9a9a"></div>
<!-- status -->
<div id="status" class="a"><div class="a t">Щелкните левой кнопкой мыши на объекте для его выделения (вместе с Ctrl - добавить к выделенным)</div>
<div class="a" style="left:1279px;top:2px;width:1px;height:16px;background:#a9adb2"></div></div>
<!-- taskbar -->
<div id="task" class="a"></div>
<svg class="a" style="left:0;top:728px" width="1366" height="40" viewBox="0 0 1366 40">
<defs>
<linearGradient id="gTask" x1="0" y1="0" x2="1" y2="0"><stop offset="0" stop-color="#120b10"/><stop offset="0.38" stop-color="#110a0c"/><stop offset="0.485" stop-color="#0f0b0d"/><stop offset="0.515" stop-color="#1b1a1e"/><stop offset="0.62" stop-color="#1e1d21"/><stop offset="0.66" stop-color="#231d1e"/><stop offset="0.78" stop-color="#211c1d"/><stop offset="0.81" stop-color="#100d12"/><stop offset="1" stop-color="#0c0b12"/></linearGradient>
</defs>
<rect width="1366" height="40" fill="url(#gTask)"/>
<!-- windows logo -->
<path d="M15.5 12.5l7-1v7h-7zM23.5 11.3l9-1.3v8.5h-9zM15.5 19.5h7v7l-7-1zM23.5 19.5h9v8.5l-9-1.3z" fill="#fff"/>
<!-- search -->
<circle cx="75" cy="17.5" r="5.5" fill="none" stroke="#fff" stroke-width="1.4"/>
<path d="M71 21.5l-6 6" stroke="#fff" stroke-width="1.6"/>
<!-- task view -->
<path d="M114 12.5h12v14h-12z" fill="none" stroke="#fff" stroke-width="1.4"/>
<path d="M111 14.5h-1.5v10h1.5M129 14.5h1.5v10h-1.5" fill="none" stroke="#fff" stroke-width="1.2"/>
<!-- edge -->
<path d="M161 21.5h16q0-10-8-10t-9 8q2-4 6-4 4 0 5 3.5h-6q-1 6 5 6 3 0 6-1.5v4.5q-3 1.5-7 1.5-9 0-9-8z" fill="#1a7ad8"/>
<!-- store -->
<path d="M209 15h18v14h-18z" fill="#fff"/>
<path d="M214 15q0-5 4-5t4 5" fill="none" stroke="#fff" stroke-width="1.4"/>
<path d="M213 18h4v3.5h-4zM218.5 18h4v3.5h-4zM213 22.5h4v3.5h-4zM218.5 22.5h4v3.5h-4z" fill="#111"/>
<!-- rocket app -->
<rect x="256" y="9" width="24" height="23" rx="2" fill="#1a9ae0"/>
<path d="M263 23l10-10q3-2 4-1t-1 4l-10 10z" fill="#fff"/>
<path d="M263 23l-3 1 3-5 3-1zM266 26l-1 3 5-3 1-3z" fill="#fff"/>
<path d="M262.5 26.5l-3 3" stroke="#fff" stroke-width="1.6"/>
<circle cx="270" cy="19" r="1.1" fill="#1a9ae0"/><circle cx="272.5" cy="16.5" r="1.1" fill="#1a9ae0"/><circle cx="267.5" cy="21.5" r="1.1" fill="#1a9ae0"/>
<!-- hp -->
<circle cx="317" cy="20.5" r="11" fill="#fff"/>
<path d="M314 12l-4.5 15h2.5l4.5-15zM319 16l-3.5 12h2.5l3.5-12zM312 19h6l-1 2h-6z" fill="#111"/>
<path d="M319.5 17h4q2.5 0 2 2.5l-1 3q-.5 2-2.5 2h-3" fill="none" stroke="#111" stroke-width="1.8"/>
<!-- skype -->
<circle cx="365.5" cy="20" r="11" fill="#22a0e8"/>
<circle cx="359" cy="13.5" r="5" fill="#22a0e8"/><circle cx="372" cy="26.5" r="5" fill="#22a0e8"/>
<path d="M369.5 15.5q-2-1.5-4-1.5-3.5 0-3.5 3 0 2 3.5 3t3.5 3q0 3-3.5 3-2.5 0-4.5-1.5" fill="none" stroke="#fff" stroke-width="2.4"/>
<!-- folder -->
<path d="M404 12h7l2 2h13v14h-22z" fill="#f4cf5a"/>
<path d="M404 16h22v12h-22z" fill="#f8dc7a"/>
<path d="M409 29v-7h11v7h-3v-3.5h-5v3.5z" fill="#2aa8e8"/>
<!-- chrome -->
<circle cx="464" cy="20" r="11" fill="#dd4b39"/>
<path d="M464 20L454.5 25.5A11 11 0 0 0 469.5 29.5z" fill="#1ea362"/>
<path d="M464 20h11A11 11 0 0 1 458.5 29.5z" fill="#1ea362"/>
<path d="M464 20l11 0A11 11 0 0 1 463 31z" fill="#ffce44"/>
<path d="M464 20L453 20A11 11 0 0 0 459 30z" fill="#1ea362"/>
<circle cx="464" cy="20" r="5" fill="#fff"/><circle cx="464" cy="20" r="3.9" fill="#4a8af4"/>
<!-- kompas active -->
<rect x="489" y="0" width="48" height="38" fill="#3a3636"/>
<circle cx="513" cy="19" r="10.5" fill="none" stroke="#2a7ad0" stroke-width="2.6"/>
<path d="M508.5 12.5v13M508.5 19l7-6.5M510 18l6 8" stroke="#2a7ad0" stroke-width="2.6" fill="none"/>
<!-- underlines -->
<rect x="395" y="38" width="40" height="2" fill="#f0b8c8"/>
<rect x="444" y="38" width="40" height="2" fill="#f0b8c8"/>
<rect x="489" y="38" width="48" height="2" fill="#f0b8c8"/>
<!-- tray -->
<circle cx="1109" cy="25" r="9" fill="#1a8ad8" stroke="#fff" stroke-width="1.5"/>
<circle cx="1118.5" cy="15" r="9.5" fill="#1a9ae0"/>
<rect x="1117" y="13" width="3" height="8" fill="#fff"/><circle cx="1118.5" cy="9.5" r="1.7" fill="#fff"/>
<circle cx="1107" cy="27" r="1.4" fill="#fff"/><circle cx="1107" cy="31" r="1.4" fill="#fff"/>
<path d="M1136.5 23.5l5.5-6 5.5 6" fill="none" stroke="#fff" stroke-width="1.3"/>
<path d="M1163 16h10v8h-10zM1173 18.5h1.5v3h-1.5" fill="none" stroke="#fff" stroke-width="1.2"/>
<path d="M1158 17v3q0 2 2 2h2M1159 15v3M1161 15v3" fill="none" stroke="#fff" stroke-width="1.2"/>
<path d="M1182.5 17.5h3l4-4v13l-4-4h-3z" fill="none" stroke="#fff" stroke-width="1.2"/>
<path d="M1192 17q1.5 2.5 0 5M1194.5 15q3 4.5 0 9M1197 13.5q3.5 6 0 12" fill="none" stroke="#aaa" stroke-width="1"/>
<path d="M1209.5 26q1-7 9-9M1212.5 26q1-4.5 6-6M1215.5 26q.5-2.5 3-3" fill="none" stroke="#fff" stroke-width="1.3"/>
<rect x="1218.5" y="23.5" width="3" height="3" fill="#fff"/>
<path d="M1230.5 12.5h15v11h-6.5l-1.5 3-1.5-3h-5.5z" fill="none" stroke="#fff" stroke-width="1.3"/>
<path d="M1233.5 16h9M1233.5 18.5h9M1233.5 21h6" stroke="#fff" stroke-width="1"/>
<text x="1257" y="24" font-size="12" fill="#fff" font-family="Liberation Sans">РУС</text>
<text x="1310" y="15" font-size="11.5" fill="#fff" font-family="Liberation Sans">19:45</text>
<text x="1297" y="32" font-size="11.5" fill="#fff" font-family="Liberation Sans">10.04.2016</text>
<rect x="1360" y="0" width="1" height="40" fill="#555"/>
</svg>

</body></html>
